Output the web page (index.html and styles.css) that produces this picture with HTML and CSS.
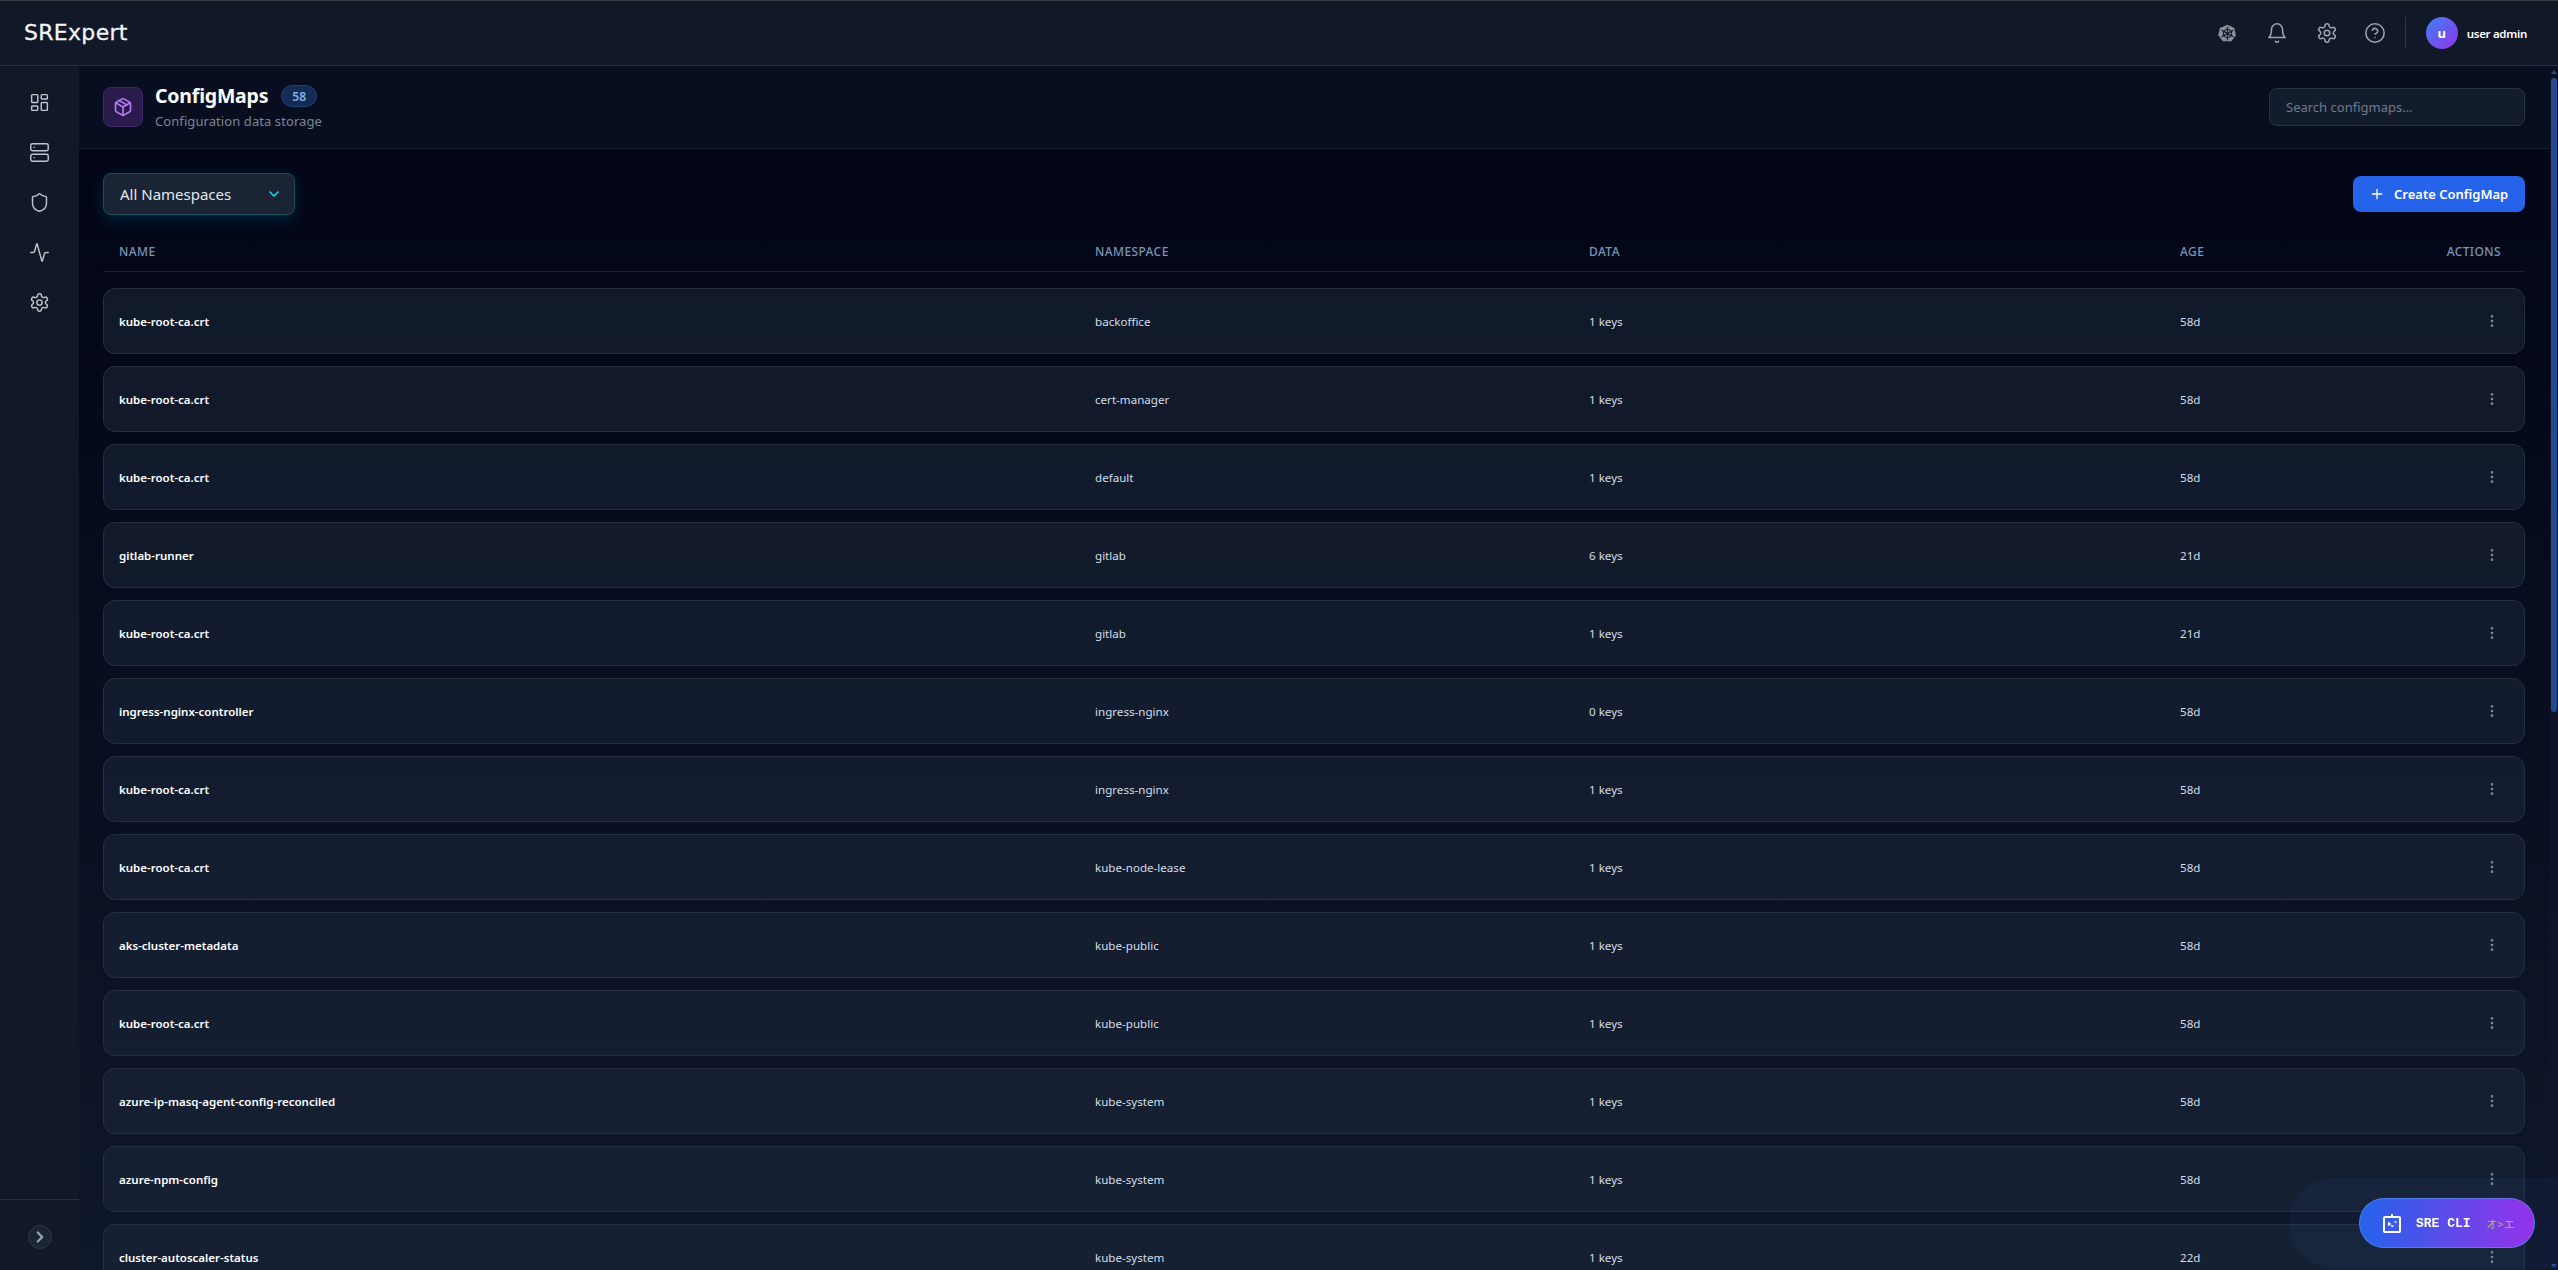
FILE: index.html
```html
<!DOCTYPE html>
<html lang="en">
<head>
<meta charset="utf-8">
<title>ConfigMaps - SRExpert</title>
<link rel="stylesheet" href="styles.css">
</head>
<body>
<svg class="sprite" aria-hidden="true">
  <symbol id="i-gear" viewBox="0 0 24 24"><path d="M12.22 2h-.44a2 2 0 0 0-2 2v.18a2 2 0 0 1-1 1.73l-.43.25a2 2 0 0 1-2 0l-.15-.08a2 2 0 0 0-2.73.73l-.22.38a2 2 0 0 0 .73 2.73l.15.1a2 2 0 0 1 1 1.72v.51a2 2 0 0 1-1 1.74l-.15.09a2 2 0 0 0-.73 2.73l.22.38a2 2 0 0 0 2.73.73l.15-.08a2 2 0 0 1 2 0l.43.25a2 2 0 0 1 1 1.73V20a2 2 0 0 0 2 2h.44a2 2 0 0 0 2-2v-.18a2 2 0 0 1 1-1.73l.43-.25a2 2 0 0 1 2 0l.15.08a2 2 0 0 0 2.73-.73l.22-.39a2 2 0 0 0-.73-2.73l-.15-.08a2 2 0 0 1-1-1.74v-.5a2 2 0 0 1 1-1.74l.15-.09a2 2 0 0 0 .73-2.73l-.22-.38a2 2 0 0 0-2.73-.73l-.15.08a2 2 0 0 1-2 0l-.43-.25a2 2 0 0 1-1-1.73V4a2 2 0 0 0-2-2z"/><circle cx="12" cy="12" r="3"/></symbol>
  <symbol id="i-dots" viewBox="0 0 24 24"><circle cx="12" cy="5" r="1"/><circle cx="12" cy="12" r="1"/><circle cx="12" cy="19" r="1"/></symbol>
</svg>

<header class="topbar">
  <div class="logo">SRExpert</div>
  <div class="top-actions">
    <svg class="top-icon k8s" viewBox="0 0 24 24">
      <path class="k8s-hull" d="M12 .8l8.6 4.1 2.1 9.3-5.9 7.5H6.2L.3 14.2l2.1-9.3z"/>
      <circle class="k8s-helm" cx="12" cy="12" r="5.2"/>
      <path class="k8s-helm" d="M12 4v16M5 8l14 8M19 8L5 16"/>
      <circle class="k8s-hub" cx="12" cy="12" r="1.6"/>
    </svg>
    <svg class="top-icon bell" viewBox="0 0 24 24"><path d="M6 8a6 6 0 0 1 12 0c0 7 3 9 3 9H3s3-2 3-9"/><path d="M10.3 21a1.94 1.94 0 0 0 3.4 0"/></svg>
    <svg class="top-icon gear"><use href="#i-gear"/></svg>
    <svg class="top-icon help" viewBox="0 0 24 24"><circle cx="12" cy="12" r="10"/><path d="M9.09 9a3 3 0 0 1 5.83 1c0 2-3 3-3 3"/><path d="M12 17h.01"/></svg>
    <div class="top-divider"></div>
    <div class="user">
      <div class="avatar">u</div>
      <span class="user-name">user admin</span>
    </div>
  </div>
</header>

<div class="shell">
  <aside class="sidebar">
    <nav class="side-nav">
      <svg class="side-icon" viewBox="0 0 24 24"><rect x="3" y="3" width="7" height="9" rx="1"/><rect x="14" y="3" width="7" height="5" rx="1"/><rect x="14" y="12" width="7" height="9" rx="1"/><rect x="3" y="16" width="7" height="5" rx="1"/></svg>
      <svg class="side-icon" viewBox="0 0 24 24"><rect x="2" y="2" width="20" height="8" rx="2"/><rect x="2" y="14" width="20" height="8" rx="2"/><path d="M6 6h.01M6 18h.01"/></svg>
      <svg class="side-icon" viewBox="0 0 24 24"><path d="M20 13c0 5-3.5 7.5-7.66 8.95a1 1 0 0 1-.67-.01C7.5 20.5 4 18 4 13V6a1 1 0 0 1 1-1c2 0 4.5-1.2 6.24-2.72a1.17 1.17 0 0 1 1.52 0C14.51 3.81 17 5 19 5a1 1 0 0 1 1 1z"/></svg>
      <svg class="side-icon" viewBox="0 0 24 24"><path d="M22 12h-2.48a2 2 0 0 0-1.93 1.46l-2.35 8.36a.25.25 0 0 1-.48 0L9.24 2.18a.25.25 0 0 0-.48 0l-2.35 8.36A2 2 0 0 1 4.49 12H2"/></svg>
      <svg class="side-icon"><use href="#i-gear"/></svg>
    </nav>
    <div class="side-foot">
      <div class="collapse">
        <svg viewBox="0 0 24 24"><path d="m9 18 6-6-6-6"/></svg>
      </div>
    </div>
  </aside>

  <main class="main">
    <section class="page-head">
      <div class="page-title-group">
        <div class="page-tile">
          <svg viewBox="0 0 24 24"><path d="m7.5 4.27 9 5.15"/><path d="M21 8a2 2 0 0 0-1-1.73l-7-4a2 2 0 0 0-2 0l-7 4A2 2 0 0 0 3 8v8a2 2 0 0 0 1 1.73l7 4a2 2 0 0 0 2 0l7-4A2 2 0 0 0 21 16Z"/><path d="m3.3 7 8.7 5 8.7-5"/><path d="M12 22V12"/></svg>
        </div>
        <div class="page-text">
          <div class="title-line">
            <h1 class="page-title">ConfigMaps</h1>
            <span class="count-badge">58</span>
          </div>
          <p class="page-desc">Configuration data storage</p>
        </div>
      </div>
      <div class="search">Search configmaps...</div>
    </section>

    <section class="content">
      <div class="toolbar">
        <div class="ns-select">
          <span>All Namespaces</span>
          <svg viewBox="0 0 24 24"><path d="m6 9 6 6 6-6"/></svg>
        </div>
        <div class="create-btn">
          <svg viewBox="0 0 24 24"><path d="M5 12h14M12 5v14"/></svg>
          <span>Create ConfigMap</span>
        </div>
      </div>

      <div class="row-grid table-head">
        <span>Name</span><span>Namespace</span><span>Data</span><span>Age</span><span class="cell-end">Actions</span>
      </div>

      <div class="rows">
        <div class="row-grid card"><span class="c-name">kube-root-ca.crt</span><span class="c-ns">backoffice</span><span class="c-data">1 keys</span><span class="c-age">58d</span><svg class="dots cell-end"><use href="#i-dots"/></svg></div>
        <div class="row-grid card"><span class="c-name">kube-root-ca.crt</span><span class="c-ns">cert-manager</span><span class="c-data">1 keys</span><span class="c-age">58d</span><svg class="dots cell-end"><use href="#i-dots"/></svg></div>
        <div class="row-grid card"><span class="c-name">kube-root-ca.crt</span><span class="c-ns">default</span><span class="c-data">1 keys</span><span class="c-age">58d</span><svg class="dots cell-end"><use href="#i-dots"/></svg></div>
        <div class="row-grid card"><span class="c-name">gitlab-runner</span><span class="c-ns">gitlab</span><span class="c-data">6 keys</span><span class="c-age">21d</span><svg class="dots cell-end"><use href="#i-dots"/></svg></div>
        <div class="row-grid card"><span class="c-name">kube-root-ca.crt</span><span class="c-ns">gitlab</span><span class="c-data">1 keys</span><span class="c-age">21d</span><svg class="dots cell-end"><use href="#i-dots"/></svg></div>
        <div class="row-grid card"><span class="c-name">ingress-nginx-controller</span><span class="c-ns">ingress-nginx</span><span class="c-data">0 keys</span><span class="c-age">58d</span><svg class="dots cell-end"><use href="#i-dots"/></svg></div>
        <div class="row-grid card"><span class="c-name">kube-root-ca.crt</span><span class="c-ns">ingress-nginx</span><span class="c-data">1 keys</span><span class="c-age">58d</span><svg class="dots cell-end"><use href="#i-dots"/></svg></div>
        <div class="row-grid card"><span class="c-name">kube-root-ca.crt</span><span class="c-ns">kube-node-lease</span><span class="c-data">1 keys</span><span class="c-age">58d</span><svg class="dots cell-end"><use href="#i-dots"/></svg></div>
        <div class="row-grid card"><span class="c-name">aks-cluster-metadata</span><span class="c-ns">kube-public</span><span class="c-data">1 keys</span><span class="c-age">58d</span><svg class="dots cell-end"><use href="#i-dots"/></svg></div>
        <div class="row-grid card"><span class="c-name">kube-root-ca.crt</span><span class="c-ns">kube-public</span><span class="c-data">1 keys</span><span class="c-age">58d</span><svg class="dots cell-end"><use href="#i-dots"/></svg></div>
        <div class="row-grid card"><span class="c-name">azure-ip-masq-agent-config-reconciled</span><span class="c-ns">kube-system</span><span class="c-data">1 keys</span><span class="c-age">58d</span><svg class="dots cell-end"><use href="#i-dots"/></svg></div>
        <div class="row-grid card"><span class="c-name">azure-npm-config</span><span class="c-ns">kube-system</span><span class="c-data">1 keys</span><span class="c-age">58d</span><svg class="dots cell-end"><use href="#i-dots"/></svg></div>
        <div class="row-grid card"><span class="c-name">cluster-autoscaler-status</span><span class="c-ns">kube-system</span><span class="c-data">1 keys</span><span class="c-age">22d</span><svg class="dots cell-end"><use href="#i-dots"/></svg></div>
      </div>
    </section>
  </main>

  <div class="scroll-track">
    <div class="scroll-arrow-up"></div>
    <div class="scroll-thumb"></div>
    <div class="scroll-arrow-down"></div>
  </div>
</div>

<div class="cli-halo"></div>
<div class="cli-btn">
  <svg class="cli-icon" viewBox="0 0 20 20">
    <path class="cli-frame" d="M3 4h14a1 1 0 0 1 1 1v13a1 1 0 0 1-1 1H3a1 1 0 0 1-1-1V5a1 1 0 0 1 1-1zM10 4V1"/>
    <path class="cli-face" d="M6 9.5l2 1.5-2 1.5M9 13h2.5M12.5 9h2"/>
  </svg>
  <span class="cli-label">SRE CLI</span>
  <span class="cli-keys">オ&gt;エ</span>
</div>
</body>
</html>
```

FILE: styles.css
```css
* { box-sizing: border-box; }

html, body { height: 100%; }

body {
  margin: 0;
  display: flex;
  flex-direction: column;
  overflow: hidden;
  background: #020617;
  color: #e2e8f0;
  font-family: "Noto Sans", "Liberation Sans", sans-serif;
  font-size: 12px;
}

.sprite { display: none; }

.topbar {
  flex: none;
  height: 66px;
  display: flex;
  align-items: center;
  justify-content: space-between;
  padding: 0 31px 0 24px;
  background: #111827;
  border-top: 1px solid #3b4048;
  border-bottom: 1px solid #273040;
}

.logo {
  font-family: "DejaVu Sans", sans-serif;
  font-size: 22px;
  line-height: 30px;
  letter-spacing: 0.3px;
  color: #f1f5f9;
  -webkit-text-stroke: 0.3px #f1f5f9;
}

.top-actions { display: flex; align-items: center; }

.top-icon {
  width: 22px;
  height: 22px;
  fill: none;
  stroke: #9ca3af;
  stroke-width: 1.7;
  stroke-linecap: round;
  stroke-linejoin: round;
}

.k8s { width: 19px; height: 19px; stroke: none; margin-right: 29px; }
.k8s-hull { fill: #8b909a; stroke: none; }
.k8s-helm { fill: none; stroke: #1b2232; stroke-width: 1.6; }
.k8s-hub { fill: #1b2232; stroke: none; }
.bell { margin-right: 28px; }
.gear { margin-right: 26px; }
.help { margin-right: 19px; }

.top-divider { width: 1px; height: 32px; background: #2e3644; margin-right: 20px; }

.user { display: flex; align-items: center; gap: 9px; }

.avatar {
  width: 32px;
  height: 32px;
  border-radius: 50%;
  display: flex;
  align-items: center;
  justify-content: center;
  background: linear-gradient(135deg, #3b82f6, #9333ea);
  color: #fff;
  font-size: 13px;
  font-weight: 700;
}

.user-name {
  color: #fff;
  font-size: 11.5px;
  font-weight: 600;
  letter-spacing: -0.3px;
  white-space: nowrap;
}

.shell { flex: 1; min-height: 0; display: flex; }

.sidebar {
  flex: none;
  width: 79px;
  display: flex;
  flex-direction: column;
  justify-content: space-between;
  background: #111827;
}

.side-nav {
  display: flex;
  flex-direction: column;
  align-items: center;
  gap: 29px;
  padding-top: 26px;
}

.side-icon {
  width: 21px;
  height: 21px;
  fill: none;
  stroke: #c0c5cd;
  stroke-width: 1.65;
  stroke-linecap: round;
  stroke-linejoin: round;
}

.side-foot {
  height: 71px;
  display: flex;
  justify-content: center;
  padding-top: 25px;
  border-top: 1px solid #273040;
}

.collapse {
  width: 24px;
  height: 24px;
  border-radius: 50%;
  display: flex;
  align-items: center;
  justify-content: center;
  background: #1b2434;
  border: 1px solid #2f3848;
}

.collapse svg {
  width: 18px;
  height: 18px;
  fill: none;
  stroke: #9ca3af;
  stroke-width: 3;
  stroke-linecap: round;
  stroke-linejoin: round;
}

.main {
  flex: 1;
  min-width: 0;
  overflow: hidden;
  background: linear-gradient(180deg, #020617 10%, #0f172a 100%);
}

.scroll-track {
  flex: none;
  width: 8px;
  display: flex;
  flex-direction: column;
  align-items: center;
  justify-content: space-between;
  padding: 4px 0 2px;
  background: linear-gradient(180deg, #0a1020, #10162c);
}

.scroll-arrow-up {
  border: 3px solid transparent;
  border-top: 0;
  border-bottom: 4px solid #234a8e;
}

.scroll-thumb {
  width: 6px;
  height: 634px;
  margin-top: 4px;
  margin-bottom: auto;
  border-radius: 3px;
  background: #234a8e;
}

.scroll-arrow-down {
  border: 3px solid transparent;
  border-bottom: 0;
  border-top: 4px solid #234a8e;
}

.page-head {
  height: 83px;
  display: flex;
  align-items: center;
  justify-content: space-between;
  padding: 0 25px 0 24px;
  background: #080e1f;
  border-bottom: 1px solid #151c2c;
}

.page-title-group { display: flex; align-items: center; gap: 12px; }

.page-tile {
  width: 40px;
  height: 40px;
  display: flex;
  align-items: center;
  justify-content: center;
  background: #2a1a4d;
  border: 1px solid #3c2a62;
  border-radius: 8px;
}

.page-tile svg {
  width: 20px;
  height: 20px;
  fill: none;
  stroke: #b57bee;
  stroke-width: 2;
  stroke-linecap: round;
  stroke-linejoin: round;
}

.title-line { display: flex; align-items: center; gap: 13px; height: 26px; }

.page-title {
  margin: 0;
  font-size: 19.5px;
  line-height: 26px;
  font-weight: 700;
  letter-spacing: -0.2px;
  color: #fff;
}

.count-badge {
  height: 22px;
  padding: 0 10px;
  display: flex;
  align-items: center;
  background: #152c52;
  border: 1px solid #1e3f78;
  border-radius: 11px;
  color: #7fb2f2;
  font-size: 12px;
  font-weight: 600;
}

.page-desc {
  margin: 2px 0 0;
  font-size: 13px;
  line-height: 20px;
  letter-spacing: 0.08px;
  color: #7b8596;
}

.search {
  width: 256px;
  height: 38px;
  display: flex;
  align-items: center;
  padding: 0 16px;
  background: #131c2c;
  border: 1px solid #2a3342;
  border-radius: 8px;
  color: #6f7a8a;
  font-size: 13px;
}

.content { padding: 24px 25px 24px 24px; }

.toolbar {
  height: 42px;
  display: flex;
  align-items: center;
  justify-content: space-between;
}

.ns-select {
  width: 192px;
  height: 42px;
  display: flex;
  align-items: center;
  justify-content: space-between;
  padding: 0 12px 0 16px;
  background: #1a2434;
  border: 1px solid #14505f;
  border-radius: 8px;
  box-shadow: 0 4px 16px rgba(6, 182, 212, 0.18);
  color: #e2e8f0;
  font-size: 15px;
}

.ns-select svg {
  width: 16px;
  height: 16px;
  fill: none;
  stroke: #22d3ee;
  stroke-width: 2.4;
  stroke-linecap: round;
  stroke-linejoin: round;
}

.create-btn {
  width: 172px;
  height: 36px;
  display: flex;
  align-items: center;
  gap: 9px;
  padding-left: 16px;
  background: #2563eb;
  border-radius: 8px;
  color: #fff;
  font-size: 13px;
  font-weight: 600;
}

.create-btn svg {
  width: 16px;
  height: 16px;
  fill: none;
  stroke: #fff;
  stroke-width: 2;
  stroke-linecap: round;
}

.row-grid {
  display: grid;
  grid-template-columns: 976px 494px 591px 100px 1fr;
  align-items: center;
}

.table-head {
  height: 57px;
  padding: 16px 24px 0 16px;
  border-bottom: 1px solid #1c2434;
  color: #7a95b8;
  font-size: 12px;
  font-weight: 500;
  letter-spacing: 0.4px;
  text-transform: uppercase;
}

.cell-end { justify-self: end; }

.rows {
  display: flex;
  flex-direction: column;
  gap: 12px;
  margin-top: 16px;
}

.card {
  height: 66px;
  padding: 0 24px 0 15px;
  background: rgba(30, 41, 59, 0.5);
  border: 1px solid #262f3f;
  border-radius: 12px;
  font-size: 11.6px;
}

.c-name { color: #fff; font-weight: 600; font-size: 11.5px; }
.c-ns { color: #d3deea; }
.c-data { color: #d3deea; }
.c-age { color: #d3deea; }

.dots {
  width: 16px;
  height: 16px;
  fill: #7d8798;
  stroke: #7d8798;
  stroke-width: 2;
}

.cli-halo {
  position: fixed;
  left: 2289px;
  top: 1178px;
  width: 316px;
  height: 90px;
  border-radius: 45px;
  background: rgba(59, 130, 246, 0.05);
  pointer-events: none;
}

.cli-btn {
  position: fixed;
  left: 2359px;
  top: 1198px;
  width: 176px;
  height: 50px;
  display: flex;
  align-items: center;
  padding-left: 22px;
  border-radius: 25px;
  border: 1px solid rgba(96, 165, 250, 0.5);
  background: linear-gradient(90deg, #2563eb, #9333ea);
}

.cli-icon { width: 20px; height: 20px; fill: none; margin-right: 14px; }
.cli-frame { stroke: #fff; stroke-width: 2; }
.cli-face { stroke: #fff; stroke-width: 1.6; }

.cli-label {
  font-family: "Liberation Mono", monospace;
  font-size: 13px;
  font-weight: 700;
  color: #fff;
  margin-right: 16px;
  white-space: nowrap;
}

.cli-keys {
  font-family: "Noto Sans CJK JP", sans-serif;
  font-size: 10.5px;
  letter-spacing: 0.5px;
  color: #b0c85a;
  white-space: nowrap;
}
```
